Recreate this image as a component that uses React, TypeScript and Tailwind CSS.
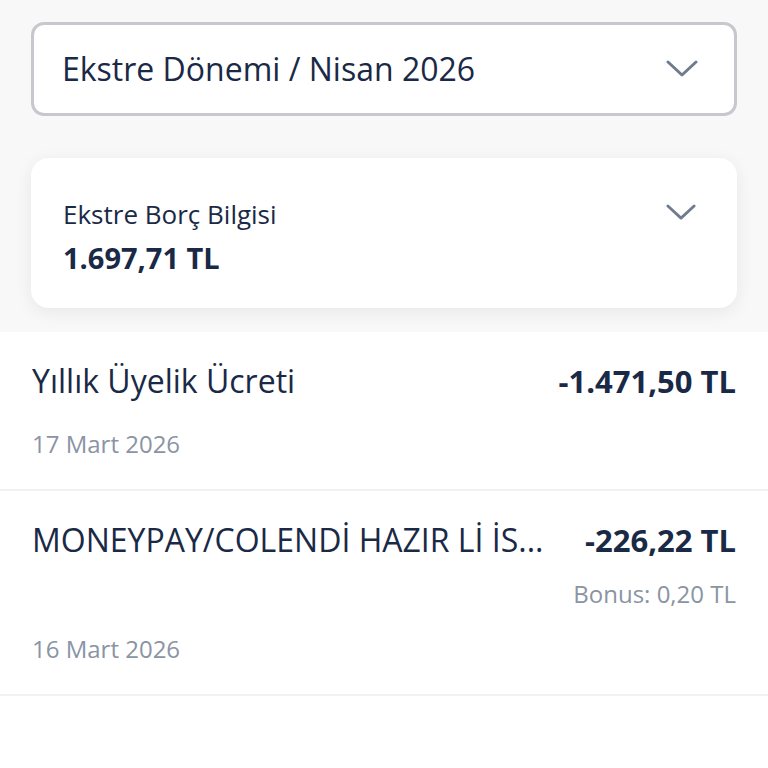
import React from 'react';

function Chevron({ className }: { className?: string }) {
  return (
    <svg viewBox="0 0 32 18" className={className} fill="none" aria-hidden>
      <path d="M2 2 L16 15 L30 2" stroke="#6f7c8d" strokeWidth="3" strokeLinecap="round" strokeLinejoin="round" />
    </svg>
  );
}

interface Txn {
  title: string;
  amount: string;
  bonus?: string;
  date: string;
}

const txns: Txn[] = [
  { title: 'Yıllık Üyelik Ücreti', amount: '-1.471,50 TL', date: '17 Mart 2026' },
  { title: 'MONEYPAY/COLENDİ HAZIR Lİ İS...', amount: '-226,22 TL', bonus: 'Bonus: 0,20 TL', date: '16 Mart 2026' },
];

function TxnRow({ t }: { t: Txn }) {
  return (
    <div className="border-b-2 border-[#f0f1f4] px-[32px] pt-[29px] pb-[29px]">
      <div className="flex items-start justify-between gap-4">
        <span className="text-[32px] leading-[40px] text-[#1a2946] whitespace-nowrap">{t.title}</span>
        <span className="text-[31px] leading-[40px] font-bold text-[#1a2946] whitespace-nowrap">{t.amount}</span>
      </div>
      {t.bonus && (
        <div className="text-right text-[24px] leading-[32px] text-[#8a94a3] mt-[18px]">{t.bonus}</div>
      )}
      <div className={t.bonus ? 'text-[24px] leading-[32px] text-[#8a94a3] mt-[23px]' : 'text-[24px] leading-[32px] text-[#8a94a3] mt-[27px]'}>
        {t.date}
      </div>
    </div>
  );
}

export default function App() {
  return (
    <div className="w-[768px] h-[768px] overflow-hidden bg-white" style={{ fontFamily: '"Open Sans", "Noto Sans", sans-serif' }}>
      <div className="bg-[#f8f8f9] px-[31px] pt-[22px] pb-[24px]">
        <div className="h-[94px] rounded-[13px] border-[3px] border-[#c6c8cd] bg-white flex items-center justify-between pl-[28px] pr-[36px]">
          <span className="text-[32px] text-[#1a2946]">Ekstre Dönemi / Nisan 2026</span>
          <Chevron className="w-[32px] h-[18px]" />
        </div>
        <div className="mt-[42px] h-[150px] rounded-[18px] bg-white shadow-[0_4px_18px_rgba(0,0,0,0.07)] flex justify-between pl-[32px] pr-[41px] pt-[40px]">
          <div className="flex flex-col">
            <span className="text-[26px] leading-[32px] font-medium text-[#1a2946]">Ekstre Borç Bilgisi</span>
            <span className="text-[29px] leading-[36px] font-bold text-[#1a2946] mt-[10px]">1.697,71 TL</span>
          </div>
          <Chevron className="w-[30px] h-[17px] mt-[6px]" />
        </div>
      </div>
      {txns.map((t) => (
        <TxnRow key={t.date} t={t} />
      ))}
    </div>
  );
}
